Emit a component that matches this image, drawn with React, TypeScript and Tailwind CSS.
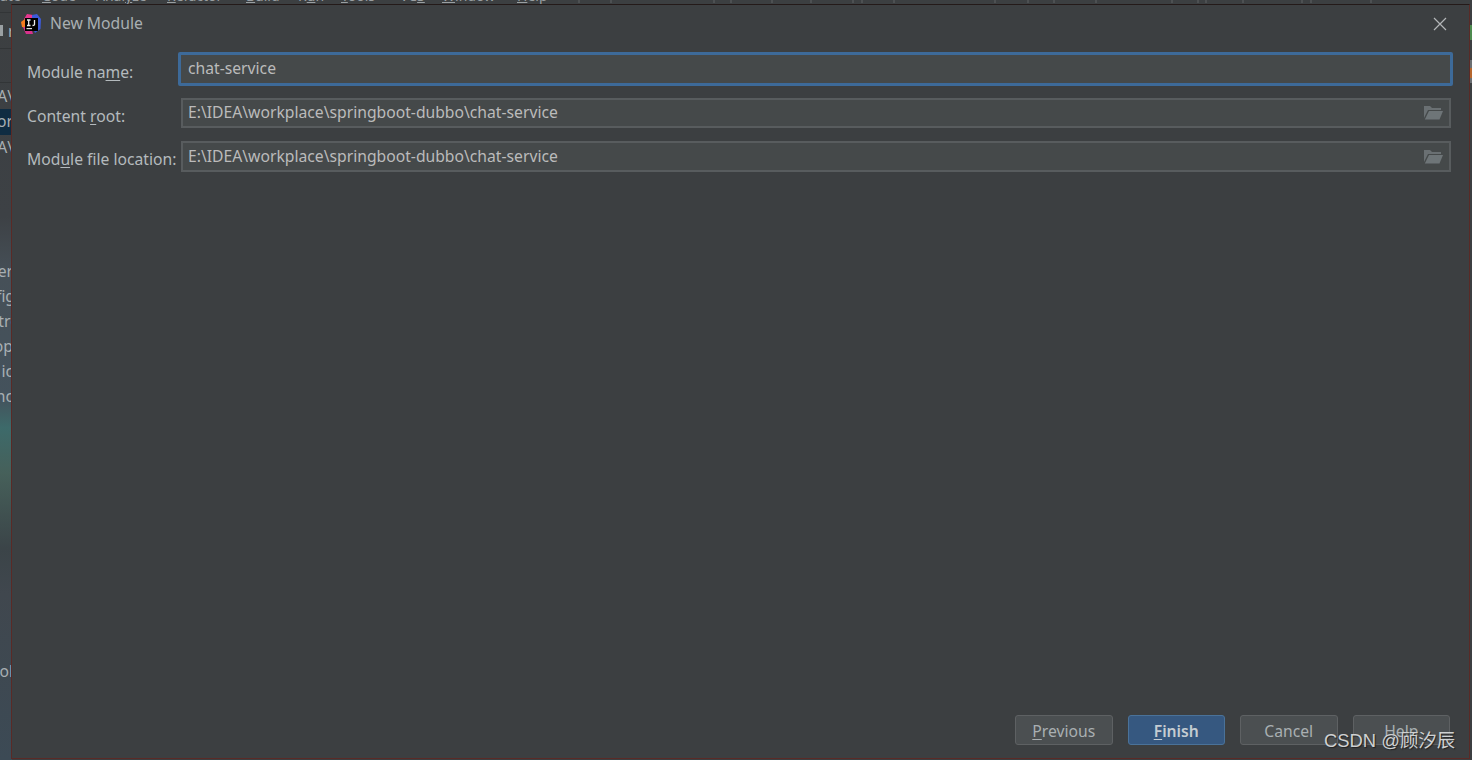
import React from 'react';

const menuItems = [
  { pre: 'ate', u: '', post: '', w: 'w-[42px]' },
  { pre: '', u: 'C', post: 'ode', w: 'w-[54px]' },
  { pre: 'Anal', u: 'y', post: 'ze', w: 'w-[71px]' },
  { pre: '', u: 'R', post: 'efactor', w: 'w-[79px]' },
  { pre: '', u: 'B', post: 'uild', w: 'w-[52px]' },
  { pre: 'R', u: 'u', post: 'n', w: 'w-[43px]' },
  { pre: '', u: 'T', post: 'ools', w: 'w-[59px]' },
  { pre: 'VC', u: 'S', post: '', w: 'w-[42px]' },
  { pre: '', u: 'W', post: 'indow', w: 'w-[75px]' },
  { pre: '', u: 'H', post: 'elp', w: 'w-[62px]' },
];

// bottoms of the toolbar glyphs that stick out above the dialog
const topTicks = [579, 611, 714, 731, 772, 811, 853, 862, 894, 995, 1028, 1054, 1096, 1172, 1198, 1206, 1243, 1302, 1311, 1371];

const sideRows = [
  { text: 'A\\', cls: 'h-[24px] mt-[80px]', off: '-mr-[1px]' },
  { text: 'or', cls: 'h-[26px] bg-[#0f2c42]', off: '-mr-[1px]' },
  { text: 'A\\', cls: 'h-[25px]', off: '-mr-[1px]' },
  { text: 'er', cls: 'h-[25px] mt-[99px]', off: '-mr-[1px]' },
  { text: 'fig', cls: 'h-[25px]', off: '-mr-[3px]' },
  { text: 'tre', cls: 'h-[25px]', off: '-mr-[7px]' },
  { text: 'op', cls: 'h-[25px]', off: '-mr-[1px]' },
  { text: 'ic', cls: 'h-[25px]', off: '-mr-[1px]' },
  { text: 'nc', cls: 'h-[25px]', off: '-mr-[1px]' },
  { text: 'ol', cls: 'h-[25px] mt-[250px]', off: '-mr-[1px]' },
];

function ProductLogo() {
  return (
    <svg width="20" height="20" viewBox="0 0 20 20" className="shrink-0">
      <path d="M3 5 L6 0 L12 1 L12 8 L4 10 Z" fill="#e8368f" />
      <path d="M11 1 L16 0 L20 5 L19.5 15 L14 19 L11 12 Z" fill="#3d5bd8" />
      <path d="M0 8 L4 5 L6 14 L1 13 Z" fill="#f57c1f" />
      <path d="M2 13 L10 13 L12 20 L5 20 Z" fill="#d9318c" />
      <rect x="4" y="4" width="13" height="13" fill="#000" />
      <rect x="5.5" y="14" width="5.5" height="1.2" fill="#ddd" />
      <path d="M6 6 H9.5 M7.7 6 V11.5 M6 11.5 H9.5 M13.5 6 V10.5 Q13.5 11.5 11.5 11.5" stroke="#eee" strokeWidth="1.3" fill="none" />
    </svg>
  );
}

function FolderIcon() {
  return (
    <svg width="19" height="16" viewBox="0 0 19 16" className="shrink-0">
      <path d="M0 1 H6 L8 3 H17 V5 H4 L0 13 Z" fill="#6a7073" />
      <path d="M5 6 H19 L15.5 14.5 H0.8 Z" fill="#6e7578" />
    </svg>
  );
}

function Field({ label, wrap, labelTop, value, focused, folder }: {
  label: [string, string, string];
  wrap: string;
  labelTop: string;
  value: string;
  focused?: boolean;
  folder?: boolean;
}) {
  return (
    <div className={`flex ${wrap}`}>
      <div className={`w-[154px] shrink-0 ${labelTop} text-[15.7px] leading-[22px] text-[#b4babd] whitespace-nowrap`}>
        {label[0]}
        <span className="underline underline-offset-2">{label[1]}</span>
        {label[2]}
      </div>
      <div
        className={
          focused
            ? 'flex items-center h-[34px] w-[1275px] -ml-[3px] border-[3px] border-[#3d6a99] rounded-[2px] bg-[#45494a] pl-[7px] text-[15.7px] text-[#bbbbbb]'
            : 'flex items-center justify-between w-[1270px] h-full border-2 border-[#585c5e] bg-[#45494a] pl-[5px] pr-[6px] text-[15.7px] text-[#bbbbbb]'
        }
      >
        <span className="whitespace-nowrap">{value}</span>
        {folder && <FolderIcon />}
      </div>
    </div>
  );
}

function DialogButton({ label, u, primary }: { label: string; u?: boolean; primary?: boolean }) {
  const first = u ? label[0] : '';
  const rest = u ? label.slice(1) : label;
  return (
    <button
      className={
        primary
          ? 'h-[30px] w-[97.5px] pt-[3px] rounded-[3px] border border-[#4a7299] bg-[#365880] text-[15.7px] font-semibold text-[#c4ccd2]'
          : 'h-[30px] w-[97.5px] pt-[3px] rounded-[3px] border border-[#5e6163] bg-[#4b4f51] text-[15.7px] text-[#a9afb2]'
      }
    >
      <span className="underline underline-offset-2">{first}</span>
      {rest}
    </button>
  );
}

export default function App() {
  return (
    <div className="relative h-[760px] w-[1472px] overflow-hidden bg-[#3c3f41] font-['Noto_Sans','Open_Sans',sans-serif]">
      {/* IDE behind the dialog, only its edges show */}
      <div className="flex h-[5px] items-end overflow-hidden bg-[#3c3f41] text-[14px] leading-[18px] text-[#9a9fa2]">
        {menuItems.map((m) => (
          <span key={m.pre + m.u} className={`${m.w} block h-[18px] shrink-0 whitespace-nowrap`}>
            {m.pre}
            <span className="underline underline-offset-1">{m.u}</span>
            {m.post}
          </span>
        ))}
      </div>
      <svg width="1472" height="4" className="absolute left-0 top-0" stroke="#5f6365" strokeWidth="1">
        {topTicks.map((x) => (
          <line key={x} x1={x} x2={x} y1="0" y2="3" />
        ))}
      </svg>

      <div className="absolute left-0 top-[5px] flex h-[755px] w-[12px] flex-col overflow-hidden bg-[linear-gradient(180deg,#3c3f41_0%,#3d4145_28%,#465058_36%,#44525c_52%,#3d6a6a_56%,#46605a_62%,#3b4448_72%,#40474e_78%,#3c4a55_100%)]">
        <div className="absolute left-0 top-[7px] h-[1px] w-full bg-[#323537]" />
        <div className="absolute left-0 top-[43px] h-[1px] w-full bg-[#323537]" />
        <div className="absolute left-0 top-[77px] h-[1px] w-full bg-[#323537]" />
        <div className="absolute left-0 top-[20px] h-[11px] w-[3px] bg-[#9aa0a3]" />
        <span className="absolute left-[8px] top-[15px] text-[15.7px] leading-[22px] text-[#a8afb3]">r</span>
        {sideRows.map((row, i) => (
          <div
            key={i}
            className={`${row.cls} flex shrink-0 items-center justify-end overflow-hidden text-[15.7px] text-[#a8afb3] whitespace-nowrap`}
          >
            <span className={row.off}>{row.text}</span>
          </div>
        ))}
      </div>

      {/* error stripe peeking out on the right */}
      <div className="absolute right-0 top-[25px] flex h-[60px] w-[2px] flex-col">
        <div className="h-[15px] bg-[#4d8a4f]" />
        <div className="mt-[20px] h-[8px] bg-[#6b6f72]" />
        <div className="h-[10px] bg-[#b5672f]" />
        <div className="h-[5px] bg-[#6b6f72]" />
      </div>

      {/* New Module dialog */}
      <div className="absolute left-[11px] top-[4px] flex h-[755px] w-[1459px] flex-col border border-[#5a2a26] border-t-[#241a19] bg-[#3c3f41]">
        <div className="flex h-[38px] shrink-0 items-center pl-[9px] pr-[22px]">
          <ProductLogo />
          <span className="ml-[9px] text-[15.7px] text-[#a9afb2]">New Module</span>
          <svg width="14" height="14" viewBox="0 0 14 14" className="ml-auto" stroke="#b3b6b8" strokeWidth="1.2">
            <path d="M1 1 L13 13 M13 1 L1 13" />
          </svg>
        </div>

        <div className="flex flex-col pl-[15px]">
          <Field label={['Module na', 'm', 'e:']} wrap="mt-[9px]" labelTop="pt-[9px]" value="chat-service" focused />
          <Field label={['Content ', 'r', 'oot:']} wrap="mt-[12px] h-[30px]" labelTop="pt-[7px]" value="E:\IDEA\workplace\springboot-dubbo\chat-service" folder />
          <Field label={['Mod', 'u', 'le file location:']} wrap="mt-[13px] h-[31px]" labelTop="pt-[7px]" value="E:\IDEA\workplace\springboot-dubbo\chat-service" folder />
        </div>

        <div className="mt-auto mb-[13px] flex justify-end gap-[15px] pr-[19px]">
          <DialogButton label="Previous" u />
          <DialogButton label="Finish" u primary />
          <DialogButton label="Cancel" />
          <DialogButton label="Help" />
        </div>
      </div>

      {/* CSDN watermark */}
      <div className="absolute left-[1324px] top-[730px] text-[18.4px] leading-[22px] text-[#cfd1d2] [text-shadow:1px_1px_1px_#222] font-['Liberation_Sans','Noto_Sans_CJK_SC',sans-serif] whitespace-nowrap">
        CSDN @顾汐辰
      </div>
    </div>
  );
}
